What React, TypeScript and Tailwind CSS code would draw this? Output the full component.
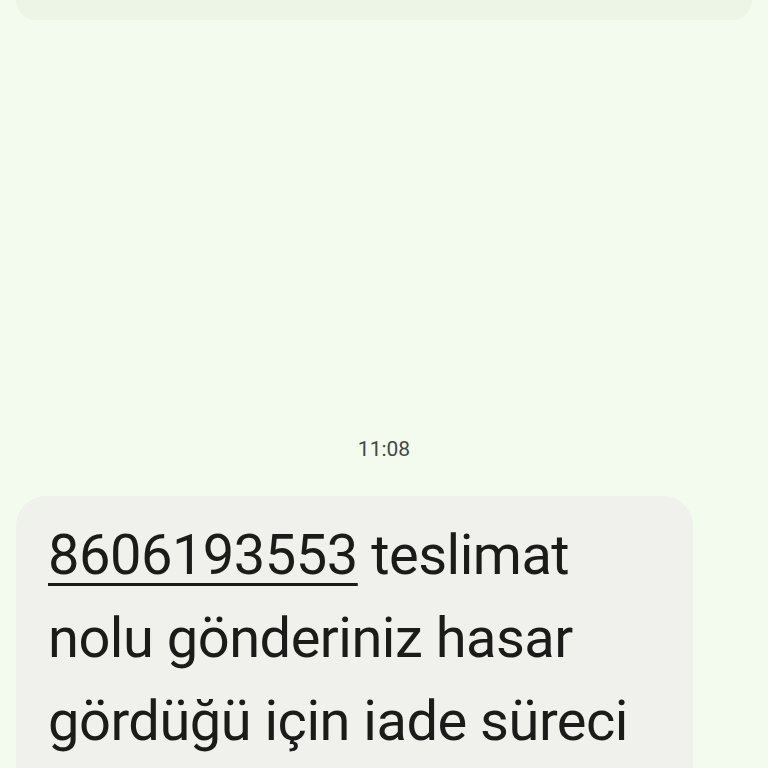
export default function App() {
  return (
    <div className="flex h-[768px] flex-col overflow-hidden bg-[#f3fbef] font-['Roboto',sans-serif]">
      <div className="mx-4 h-[20px] shrink-0 rounded-b-[28px] bg-[#edf5e7]" />

      <div className="mt-[415px] shrink-0 text-center text-[21px] leading-7 text-[#454845]">11:08</div>

      <div className="ml-4 mt-[33px] w-[677px] shrink-0 rounded-[30px] bg-[#f0f1ec] px-8 pt-[18px] pb-8 text-[56px] leading-[83px] tracking-[-0.5px] text-[#1b1c1a]">
        <span className="underline decoration-[3px] underline-offset-[9px]">8606193553</span> teslimat
        <br />
        nolu gönderiniz hasar
        <br />
        gördüğü için iade süreci
      </div>
    </div>
  );
}
